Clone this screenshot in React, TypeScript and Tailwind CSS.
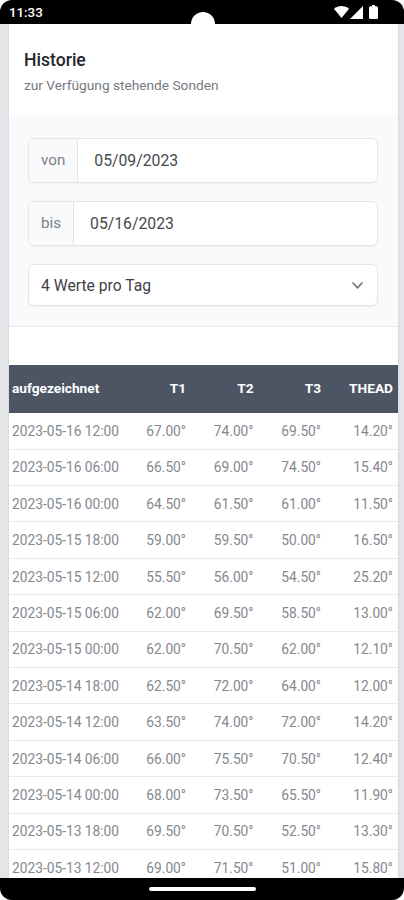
import type { ReactNode } from "react"

type Reading = {
  recordedAt: string
  values: string[]
}

const readings: Reading[] = [
  { recordedAt: "2023-05-16 12:00", values: ["67.00", "74.00", "69.50", "14.20"] },
  { recordedAt: "2023-05-16 06:00", values: ["66.50", "69.00", "74.50", "15.40"] },
  { recordedAt: "2023-05-16 00:00", values: ["64.50", "61.50", "61.00", "11.50"] },
  { recordedAt: "2023-05-15 18:00", values: ["59.00", "59.50", "50.00", "16.50"] },
  { recordedAt: "2023-05-15 12:00", values: ["55.50", "56.00", "54.50", "25.20"] },
  { recordedAt: "2023-05-15 06:00", values: ["62.00", "69.50", "58.50", "13.00"] },
  { recordedAt: "2023-05-15 00:00", values: ["62.00", "70.50", "62.00", "12.10"] },
  { recordedAt: "2023-05-14 18:00", values: ["62.50", "72.00", "64.00", "12.00"] },
  { recordedAt: "2023-05-14 12:00", values: ["63.50", "74.00", "72.00", "14.20"] },
  { recordedAt: "2023-05-14 06:00", values: ["66.00", "75.50", "70.50", "12.40"] },
  { recordedAt: "2023-05-14 00:00", values: ["68.00", "73.50", "65.50", "11.90"] },
  { recordedAt: "2023-05-13 18:00", values: ["69.50", "70.50", "52.50", "13.30"] },
  { recordedAt: "2023-05-13 12:00", values: ["69.00", "71.50", "51.00", "15.80"] },
]

const columns = ["T1", "T2", "T3", "THEAD"]

const rowGrid = "grid grid-cols-[108px_66px_67.5px_67.5px_1fr] items-center pl-[3.5px] pr-[5px]"

function StatusBar() {
  return (
    <div className="relative flex h-[23.5px] shrink-0 items-center justify-between bg-black pl-[9px] pr-[26px] text-white">
      <span className="pt-[3px] text-[13.3px] font-medium">11:33</span>
      <div className="flex items-center pt-[1px]">
        <svg className="h-3 w-[15px]" viewBox="0 0 15 12" fill="currentColor">
          <path d="M7.5 12 0.4 3.2Q0 2.4 1 1.8Q7.5-1.6 14 1.8Q15 2.4 14.6 3.2Z" />
        </svg>
        <svg className="ml-px h-[13px] w-[13px]" viewBox="0 0 13 13" fill="currentColor">
          <path d="M13 0V13H0Z" />
        </svg>
        <svg className="ml-[6px] h-[14px] w-[9px]" viewBox="0 0 9 14" fill="currentColor">
          <path d="M3 0h3v1.2h1.5Q9 1.2 9 2.7v9.8Q9 14 7.5 14h-6Q0 14 0 12.5V2.7Q0 1.2 1.5 1.2H3Z" />
        </svg>
      </div>
      {/* camera cutout */}
      <div className="absolute left-[191px] top-3 h-6 w-6 rounded-full bg-white" />
    </div>
  )
}

function DateField({ label, value, className }: { label: string; value: string; className: string }) {
  return (
    <div className={`flex overflow-hidden rounded-md border border-[#e3e5e8] bg-white shadow-[0_1px_1px_rgba(0,0,0,0.04)] ${className}`}>
      <span className="flex items-center border-r border-[#e3e5e8] bg-gray-50 px-3 text-[15.2px] text-[#7b808a]">{label}</span>
      <span className="flex items-center pl-[16px] pt-px text-[15.75px] text-[#46484d]">{value}</span>
    </div>
  )
}

function Row({ children }: { children: ReactNode }) {
  return (
    <div className={`${rowGrid} h-[36.42px] border-b border-[#e8eaed] pt-px text-[13.75px] text-[#84888f]`}>
      {children}
    </div>
  )
}

export default function App() {
  return (
    <div className="h-[900px] w-[404px] overflow-hidden bg-white font-['Roboto',sans-serif]">
      <div className="flex h-full flex-col overflow-hidden rounded-[12px] bg-[#e4e5e9]">
        <StatusBar />

        <div className="ml-[8.5px] mr-[6px] min-h-0 flex-1 overflow-hidden bg-white shadow-[0_0_2px_rgba(0,0,0,0.12)]">
          <div className="h-[91px] pl-[15.5px] pt-[24px]">
            <h1 className="text-[17.6px] font-medium leading-6 text-[#24262a]">Historie</h1>
            <p className="mt-[3px] text-[13.7px] leading-5 text-[#757a82]">zur Verfügung stehende Sonden</p>
          </div>

          <div className="flex h-[212px] flex-col border-b border-[#e8eaec] bg-[#f9fafb] pl-[19.5px] pr-[20px] pt-[23.5px]">
            <DateField label="von" value="05/09/2023" className="h-[44.5px]" />
            <DateField label="bis" value="05/16/2023" className="mt-[18.5px] h-[44.5px]" />
            <div className="mt-[18.5px] flex h-[42px] items-center justify-between rounded-md border border-[#e3e5e8] bg-white pl-3 pr-[14px] pt-px text-[15.7px] text-[#3f4146] shadow-[0_1px_1px_rgba(0,0,0,0.04)]">
              <span>4 Werte pro Tag</span>
              <svg className="h-[7px] w-[11px]" viewBox="0 0 11 7" fill="none" stroke="#75787c" strokeWidth="1.7" strokeLinecap="round" strokeLinejoin="round">
                <path d="M1 1l4.5 4.8 4.5-4.8" />
              </svg>
            </div>
          </div>

          <div className="pt-[38.5px]">
            <div className={`${rowGrid} h-[47.5px] bg-[#4b5563] pb-px text-[13.7px] font-bold text-white`}>
              <span>aufgezeichnet</span>
              {columns.map((column) => (
                <span key={column} className="text-right">{column}</span>
              ))}
            </div>
            <div className="pt-[0.6px]">
              {readings.map((reading) => (
                <Row key={reading.recordedAt}>
                  <span className="whitespace-nowrap">{reading.recordedAt}</span>
                  {reading.values.map((value, i) => (
                    <span key={i} className="text-right">{value}°</span>
                  ))}
                </Row>
              ))}
            </div>
          </div>
        </div>

        <div className="flex h-[22.5px] shrink-0 justify-center bg-black pt-[9px]">
          <div className="h-[4.5px] w-[107px] rounded-full bg-white" />
        </div>
      </div>
    </div>
  )
}
